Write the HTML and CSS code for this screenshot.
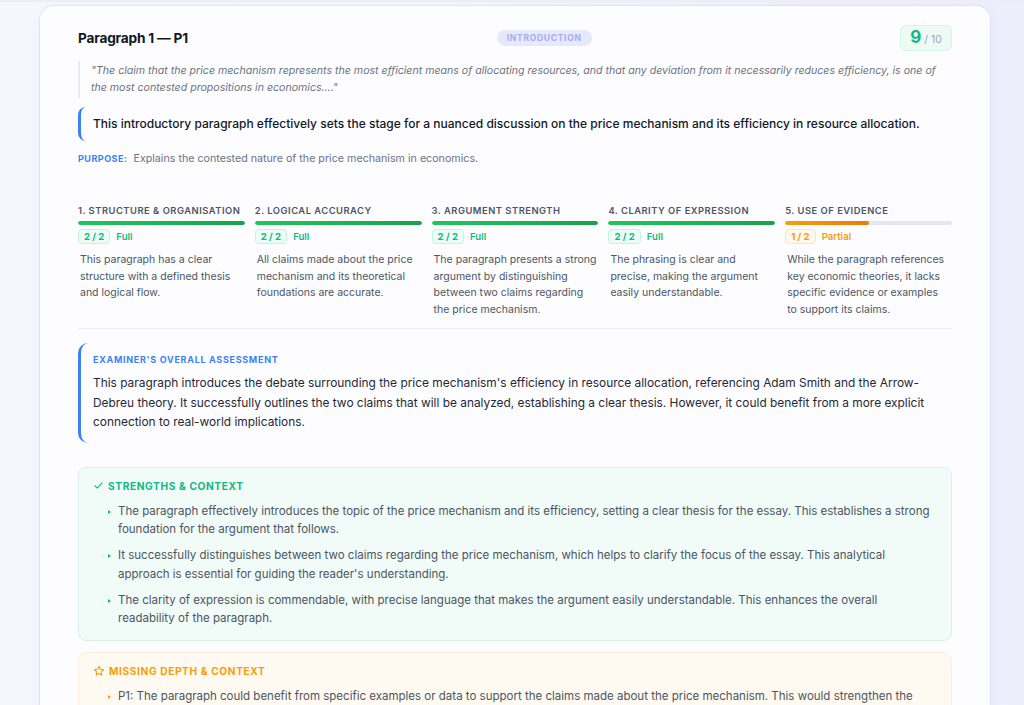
FILE: index.html
```html
<!DOCTYPE html>
<html lang="en">
<head>
<meta charset="utf-8">
<title>Paragraph 1 — P1</title>
<link rel="stylesheet" href="styles.css">
</head>
<body>
<div class="page">
  <article class="card">
    <header class="card-head">
      <h2 class="title">Paragraph 1 — P1</h2>
      <span class="tag">INTRODUCTION</span>
      <div class="score"><span class="score-num">9</span><span class="score-max">/ 10</span></div>
    </header>

    <blockquote class="quote">"The claim that the price mechanism represents the most efficient means of allocating resources, and that any deviation from it necessarily reduces efficiency, is one of the most contested propositions in economics...."</blockquote>

    <p class="summary">This introductory paragraph effectively sets the stage for a nuanced discussion on the price mechanism and its efficiency in resource allocation.</p>

    <p class="purpose"><span class="purpose-label">PURPOSE:</span> Explains the contested nature of the price mechanism in economics.</p>

    <section class="criteria">
      <div class="crit">
        <div class="crit-name">1. STRUCTURE &amp; ORGANISATION</div>
        <div class="bar"><div class="fill full" style="width:100%"></div></div>
        <div class="crit-score"><span class="chip">2 / 2</span><span class="lvl">Full</span></div>
        <p class="crit-text">This paragraph has a clear structure with a defined thesis and logical flow.</p>
      </div>
      <div class="crit">
        <div class="crit-name">2. LOGICAL ACCURACY</div>
        <div class="bar"><div class="fill full" style="width:100%"></div></div>
        <div class="crit-score"><span class="chip">2 / 2</span><span class="lvl">Full</span></div>
        <p class="crit-text">All claims made about the price mechanism and its theoretical foundations are accurate.</p>
      </div>
      <div class="crit">
        <div class="crit-name">3. ARGUMENT STRENGTH</div>
        <div class="bar"><div class="fill full" style="width:100%"></div></div>
        <div class="crit-score"><span class="chip">2 / 2</span><span class="lvl">Full</span></div>
        <p class="crit-text">The paragraph presents a strong argument by distinguishing between two claims regarding the price mechanism.</p>
      </div>
      <div class="crit">
        <div class="crit-name">4. CLARITY OF EXPRESSION</div>
        <div class="bar"><div class="fill full" style="width:100%"></div></div>
        <div class="crit-score"><span class="chip">2 / 2</span><span class="lvl">Full</span></div>
        <p class="crit-text">The phrasing is clear and precise, making the argument easily understandable.</p>
      </div>
      <div class="crit">
        <div class="crit-name">5. USE OF EVIDENCE</div>
        <div class="bar"><div class="fill partial" style="width:50%"></div></div>
        <div class="crit-score"><span class="chip chip-partial">1 / 2</span><span class="lvl lvl-partial">Partial</span></div>
        <p class="crit-text">While the paragraph references key economic theories, it lacks specific evidence or examples<br>to support its claims.</p>
      </div>
    </section>

    <section class="assessment">
      <div class="assess-label">EXAMINER'S OVERALL ASSESSMENT</div>
      <p class="assess-text">This paragraph introduces the debate surrounding the price mechanism's efficiency in resource allocation, referencing Adam Smith and the Arrow-Debreu theory. It successfully outlines the two claims that will be analyzed, establishing a clear thesis. However, it could benefit from a more explicit connection to real-world implications.</p>
    </section>

    <section class="box box-green">
      <div class="box-head">
        <svg class="box-icon" viewBox="0 0 24 24" width="11" height="11"><path d="M4 12.5l5 5L20 6.5" fill="none" stroke="currentColor" stroke-width="2.4" stroke-linecap="round" stroke-linejoin="round"/></svg>
        STRENGTHS &amp; CONTEXT
      </div>
      <ul class="items">
        <li>The paragraph effectively introduces the topic of the price mechanism and its efficiency, setting a clear thesis for the essay. This establishes a strong foundation for the argument that follows.</li>
        <li>It successfully distinguishes between two claims regarding the price mechanism, which helps to clarify the focus of the essay. This analytical approach is essential for guiding the reader's understanding.</li>
        <li>The clarity of expression is commendable, with precise language that makes the argument easily understandable. This enhances the overall readability of the paragraph.</li>
      </ul>
    </section>

    <section class="box box-orange">
      <div class="box-head">
        <svg class="box-icon" viewBox="0 0 24 24" width="12" height="12"><path d="M12 2.8l2.8 5.8 6.3.9-4.6 4.4 1.1 6.3L12 17.2l-5.6 3 1.1-6.3-4.6-4.4 6.3-.9z" fill="none" stroke="currentColor" stroke-width="2.2" stroke-linejoin="round"/></svg>
        MISSING DEPTH &amp; CONTEXT
      </div>
      <ul class="items">
        <li>P1: The paragraph could benefit from specific examples or data to support the claims made about the price mechanism. This would strengthen the argument and provide a more compelling case for the reader.</li>
      </ul>
    </section>
  </article>
</div>
</body>
</html>
```

FILE: styles.css
```css
* { box-sizing: border-box; }

html, body {
  margin: 0;
  padding: 0;
  height: 100%;
  overflow: hidden;
}

body {
  font-family: Inter, "Noto Sans", "Liberation Sans", sans-serif;
  background: linear-gradient(90deg, #f6f7fd 0%, #f3f4fc 50%, #eceefc 100%);
  color: #111827;
  border-top: 2px solid #eceef3;
}

.page {
  padding: 4px 34px 0 40px;
}

.card {
  width: 950px;
  background: #fdfdff;
  border-radius: 14px;
  box-shadow: 0 2px 10px rgba(99, 102, 241, 0.08), 0 0 0 1px rgba(224, 228, 248, 0.7);
  padding: 19px 38px 40px 38px;
}

.card-head {
  display: flex;
  justify-content: space-between;
  align-items: center;
  height: 26px;
}

.title {
  margin: 0;
  font-size: 13.7px;
  font-weight: 700;
  color: #111827;
  letter-spacing: -0.2px;
}

.tag {
  background: #e6e8fb;
  color: #a4adf2;
  font-size: 8.5px;
  font-weight: 700;
  letter-spacing: 0.7px;
  padding: 3px 10px;
  border-radius: 10px;
}

.score {
  display: flex;
  align-items: baseline;
  gap: 3px;
  background: #eefbf5;
  border: 1px solid #d3f5e4;
  border-radius: 6px;
  padding: 1px 9px 3px 9px;
}

.score-num {
  font-size: 17px;
  font-weight: 700;
  color: #10b981;
}

.score-max {
  font-size: 10.5px;
  color: #9ca3af;
}

.quote {
  margin: 10px 0 0 0;
  border-left: 2px solid #e9ebef;
  padding: 2px 0 2px 11px;
  font-size: 10.6px;
  font-style: italic;
  line-height: 16.5px;
  color: #6b7280;
}

.summary {
  margin: 9px 0 0 0;
  border-left: 3px solid #3b82f6;
  border-radius: 8px 0 0 8px;
  padding: 9px 0 9px 12px;
  font-size: 12px;
  font-weight: 500;
  line-height: 16px;
  color: #111827;
}

.purpose {
  margin: 11px 0 0 0;
  font-size: 10.7px;
  color: #6b7280;
}

.purpose-label {
  color: #3b82f6;
  font-weight: 700;
  font-size: 9px;
  letter-spacing: 0.5px;
  margin-right: 3px;
}

.criteria {
  display: grid;
  grid-template-columns: repeat(5, 1fr);
  gap: 10px;
  margin-top: 40px;
  padding-bottom: 10px;
  border-bottom: 1px solid #eceef5;
}

.crit-name {
  font-size: 9.4px;
  font-weight: 600;
  color: #4b5563;
  letter-spacing: 0.5px;
  line-height: 12px;
  white-space: nowrap;
}

.bar {
  height: 4px;
  border-radius: 2px;
  background: #e5e7eb;
  margin-top: 4px;
  overflow: hidden;
}

.fill { height: 100%; border-radius: 2px; }
.fill.full { background: linear-gradient(90deg, #22c55e, #16a34a); }
.fill.partial { background: linear-gradient(90deg, #f59e0b, #ea7a0c); }

.crit-score {
  display: flex;
  align-items: center;
  gap: 6px;
  margin-top: 4px;
}

.chip {
  font-size: 9.6px;
  font-weight: 700;
  color: #10b981;
  background: #ecfdf5;
  border: 1px solid #c9f1de;
  border-radius: 4px;
  padding: 1px 5px;
  line-height: 11px;
}

.chip-partial {
  color: #f59e0b;
  background: #fff8ec;
  border-color: #fde4bc;
}

.lvl {
  font-size: 9.6px;
  font-weight: 600;
  color: #10b981;
}

.lvl-partial { color: #f59e0b; }

.crit-text {
  margin: 8px 0 0 2px;
  font-size: 10.5px;
  line-height: 16.5px;
  color: #4b5563;
}

.assessment {
  margin-top: 14px;
  border-left: 3px solid #3b82f6;
  border-radius: 10px 0 0 10px;
  padding: 11px 0 11px 12px;
}

.assess-label {
  font-size: 9px;
  font-weight: 700;
  color: #3b82f6;
  letter-spacing: 0.7px;
}

.assess-text {
  margin: 8px 0 0 0;
  font-size: 11.9px;
  line-height: 19.5px;
  color: #1f2937;
}

.box {
  border-radius: 8px;
  padding: 12px 14px 12px 14px;
  margin-top: 24px;
}

.box + .box { margin-top: 11px; }

.box-green {
  background: #f1fbf8;
  border: 1px solid #d6f3e7;
}

.box-orange {
  background: #fffaf1;
  border: 1px solid #fceedd;
}

.box-head {
  display: flex;
  align-items: center;
  gap: 4px;
  font-size: 10.2px;
  font-weight: 700;
  letter-spacing: 0.6px;
}

.box-green .box-head { color: #10b981; }
.box-orange .box-head { color: #f59e0b; }

.box-icon { flex: none; }

.items {
  list-style: none;
  margin: 10px 0 0 0;
  padding: 0 0 0 25px;
}

.items li {
  position: relative;
  font-size: 11.5px;
  line-height: 18.5px;
  color: #4b5563;
  margin-bottom: 7.5px;
}

.items li:last-child { margin-bottom: 0; }

.items li::before {
  content: "";
  position: absolute;
  left: -10px;
  top: 8px;
  border-left: 3.5px solid #10b981;
  border-top: 2px solid transparent;
  border-bottom: 2px solid transparent;
}

.box-orange .items li::before { border-left-color: #f59e0b; }
```
